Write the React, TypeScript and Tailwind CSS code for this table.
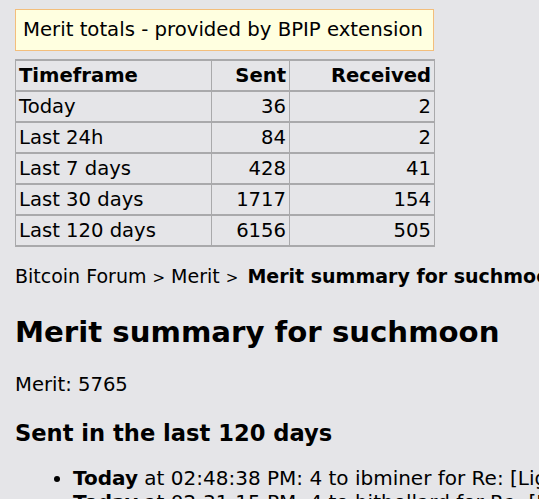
const rows = [
  { label: "Today", sent: 36, received: 2 },
  { label: "Last 24h", sent: 84, received: 2 },
  { label: "Last 7 days", sent: 428, received: 41 },
  { label: "Last 30 days", sent: 1717, received: 154 },
  { label: "Last 120 days", sent: 6156, received: 505 },
]

export default function App() {
  return (
    <div className="h-[499px] w-[539px] overflow-hidden bg-[#e5e5e8] pt-[9px] pl-[15px] font-['DejaVu_Sans',Verdana,sans-serif] text-black whitespace-nowrap">
      <div className="flex h-[42px] w-[419px] items-center border border-[#f3be7c] bg-[#ffffe0] pl-[7px] text-[19.7px]">
        Merit totals - provided by BPIP extension
      </div>

      <table className="mt-[8px] w-[419px] table-fixed border-collapse text-[19.6px] leading-[22px]">
        <colgroup>
          <col className="w-[196px]" />
          <col className="w-[78px]" />
          <col className="w-[145px]" />
        </colgroup>
        <thead>
          <tr className="h-[31px]">
            <th className="border-x border-y-2 border-[#a9a9ab] pl-[3px] text-left font-bold">Timeframe</th>
            <th className="border-x border-y-2 border-[#a9a9ab] pr-[3px] text-right font-bold">Sent</th>
            <th className="border-x border-y-2 border-[#a9a9ab] pr-[3px] text-right font-bold">Received</th>
          </tr>
        </thead>
        <tbody>
          {rows.map((r) => (
            <tr key={r.label} className="h-[31px]">
              <td className="border-x border-y-2 border-[#a9a9ab] pl-[3px]">{r.label}</td>
              <td className="border-x border-y-2 border-[#a9a9ab] pr-[3px] text-right">{r.sent}</td>
              <td className="border-x border-y-2 border-[#a9a9ab] pr-[3px] text-right">{r.received}</td>
            </tr>
          ))}
        </tbody>
      </table>

      <div className="mt-[18px] text-[19px] leading-[22px]">
        Bitcoin Forum <span className="text-[15px]">&gt;</span> Merit <span className="text-[15px]">&gt;</span>{" "}
        <b className="ml-[3px]">Merit summary for suchmoon</b>
      </div>

      <h1 className="mt-[26px] text-[29.2px] font-bold leading-[34px]">Merit summary for suchmoon</h1>

      <p className="mt-[24px] text-[19.6px] leading-[24px]">Merit: 5765</p>

      <h2 className="mt-[23px] text-[22.6px] font-bold leading-[27px]">Sent in the last 120 days</h2>

      <ul className="mt-[19px] list-disc pl-[58px] text-[20px] leading-[24px]">
        <li>
          <b>Today</b> at 02:48:38 PM: 4 to ibminer for Re: [Lightning Network] ...
        </li>
        <li>
          <b>Today</b> at 02:31:15 PM: 4 to bitbollard for Re: [Lightning Network] ...
        </li>
      </ul>
    </div>
  )
}
